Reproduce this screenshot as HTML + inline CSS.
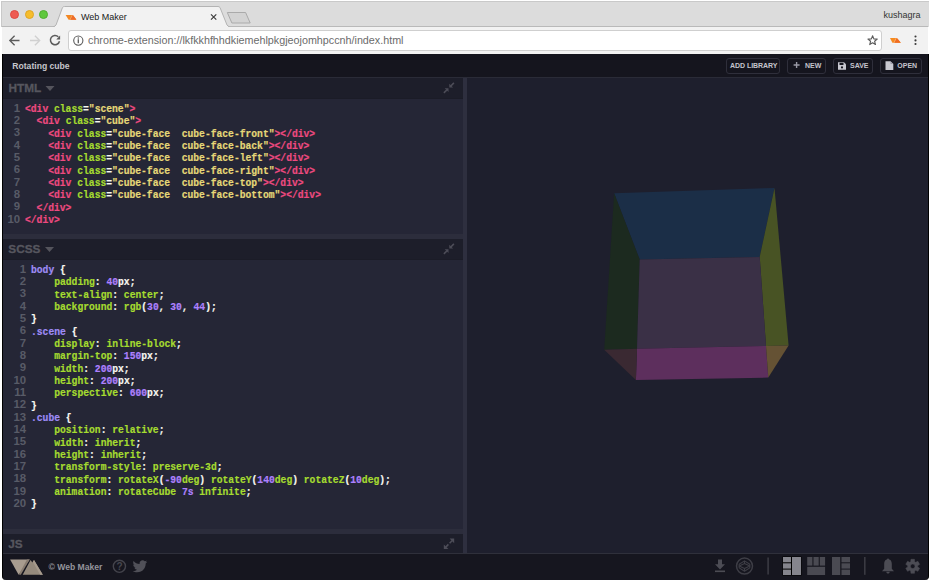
<!DOCTYPE html>
<html><head><meta charset="utf-8">
<style>
*{box-sizing:border-box;margin:0;padding:0}
html,body{width:930px;height:580px;overflow:hidden;background:#fff;font-family:"Liberation Sans",sans-serif}
.a{position:absolute}
#tabbar{left:1px;top:1px;width:928px;height:26px;background:#dcdcdc;border-top:1px solid #c9c9c9;border-left:1px solid #c9c9c9}
#toolbar{left:2px;top:26px;width:926px;height:28px;background:#f2f2f2;border-top:1px solid #b9b9b9}
.dot{width:9px;height:9px;border-radius:50%}
#url{left:68px;top:30px;width:814px;height:21px;background:#fff;border:1px solid #cfcfcf;border-radius:3px}
.urltext{left:88px;top:34px;font-size:10.76px;color:#6b6b6b;white-space:nowrap;letter-spacing:0}
#app{left:1.5px;top:54px;width:927px;height:526px;background:#16161f;border:1px solid #000;border-top:0;border-bottom:0;border-bottom-left-radius:4px;border-bottom-right-radius:4px}
#hdr{left:2.5px;top:54px;width:925px;height:23px;background:#15151e}
.ttl{left:12.3px;top:61px;font-size:8.6px;font-weight:bold;color:#c6c6cc}
.btn{top:58px;height:16px;border:1px solid #2f2f3b;border-radius:3px;color:#c4c4cc;font-size:7px;font-weight:bold;line-height:14.5px;white-space:nowrap}
.phdr{left:2.5px;width:460.5px;background:#1d1e2a}
.code{left:2.5px;width:460.5px;background:#252636}
.band{left:2.5px;width:460.5px;background:#2c2d3c}
.ptitle{font-size:11.8px;font-weight:bold;color:#56565e;-webkit-text-stroke:0.3px #56565e}
pre{font-family:"Liberation Mono",monospace;font-size:10.8px;line-height:12.33px;font-weight:bold;color:#f8f8f2;white-space:pre;transform:scaleX(0.8955);transform-origin:0 0;-webkit-text-stroke:0.2px currentColor}
.ln{transform:none;font-family:"Liberation Sans",sans-serif;font-size:11.4px;font-weight:bold;-webkit-text-stroke:0;color:#585b67;text-align:right}
.t{color:#ee4a80}.at{color:#a6dc30}.s{color:#e6d878}.n{color:#ae81ff}.sel{color:#9f8cf5}.w{color:#f8f8f2}
</style></head><body>
<!-- tab bar -->
<div id="tabbar" class="a"></div>
<div id="toolbar" class="a"></div>
<div class="a dot" style="left:10px;top:10px;background:#ee5b52;border:0.5px solid #de4a42"></div>
<div class="a dot" style="left:24.5px;top:10px;background:#f6bd2c;border:0.5px solid #dfa625"></div>
<div class="a dot" style="left:39px;top:10px;background:#5fc83d;border:0.5px solid #4fae2f"></div>
<svg class="a" style="left:0;top:0" width="930" height="30">
  <path d="M53.5 26.5 Q55 26.5 56 25 L62.5 7.5 Q63.2 6.5 64.5 6.5 L218 6.5 Q219.3 6.5 220 7.5 L227 25 Q228 26.5 229.5 26.5" fill="#f2f2f2" stroke="#b4b4b4" stroke-width="1"/>
  <rect x="55" y="26" width="173" height="2" fill="#f2f2f2"/>
  <path d="M227.3 12.5 L245.6 12.5 L250.2 23 L231.9 23 Z" fill="#d3d3d3" stroke="#aaaaaa" stroke-width="1" stroke-linejoin="round"/>
  <path d="M65.6 14.9 L72.9 14.9 L76.4 19.7 L68.6 19.7 Z" fill="#f38823"/>
  <path d="M72.4 14.9 L72.9 14.9 L76.4 19.7 L70.3 19.7 Z" fill="#ee6c2c"/>
  <path d="M71.9 14.9 L72.7 14.9 L70.3 19.7 L69.5 19.7 Z" fill="#f5a86c"/>
  <path d="M211 14.3 L216.3 19.6 M216.3 14.3 L211 19.6" stroke="#3c3c3c" stroke-width="1.15"/>
</svg>
<div class="a" style="left:81px;top:12px;font-size:9px;color:#1a1a1a;white-space:nowrap">Web Maker</div>
<div class="a" style="left:883.5px;top:10px;font-size:9px;color:#333;white-space:nowrap">kushagra</div>
<!-- toolbar -->
<div id="url" class="a"></div>
<svg class="a" style="left:0;top:27px" width="930" height="27">
  <path d="M9.8 13.5 H19.5 M14.6 8.7 L9.8 13.5 L14.6 18.3" fill="none" stroke="#5b5b5b" stroke-width="1.3"/>
  <path d="M30 13.5 H39.7 M34.9 8.7 L39.7 13.5 L34.9 18.3" fill="none" stroke="#d0d0d0" stroke-width="1.3"/>
  <path d="M58.3 9.8 A4.6 4.6 0 1 0 59.5 14.2" fill="none" stroke="#5b5b5b" stroke-width="1.5"/>
  <path d="M60.1 8.6 L60.1 12.4 L56.3 12.4 Z" fill="#5b5b5b"/>
  <circle cx="78.3" cy="13.6" r="4.6" fill="none" stroke="#5b5b5b" stroke-width="1.1"/>
  <path d="M78.3 12.3 V16.3" stroke="#5b5b5b" stroke-width="1.3"/>
  <circle cx="78.3" cy="10.9" r="0.75" fill="#5b5b5b"/>
  <path d="M872.60 8.70 L873.83 11.90 L877.26 12.09 L874.60 14.25 L875.48 17.56 L872.60 15.70 L869.72 17.56 L870.60 14.25 L867.94 12.09 L871.37 11.90 Z" fill="none" stroke="#5b5b5b" stroke-width="1.1" stroke-linejoin="round"/>
  <path d="M890 11 L896.9 11 L900.8 15.8 L892.4 15.8 Z" fill="#f68b1f"/>
  <path d="M896.3 11 L896.9 11 L900.8 15.8 L894.3 15.8 Z" fill="#f06c22"/>
  <path d="M895.8 11 L896.7 11 L894.3 15.8 L893.5 15.8 Z" fill="#f6b078"/>
  <circle cx="915.5" cy="9.5" r="1.05" fill="#3a3a3a"/><circle cx="915.5" cy="13.4" r="1.05" fill="#3a3a3a"/><circle cx="915.5" cy="17" r="1.05" fill="#3a3a3a"/>
</svg>
<div class="a urltext">chrome-extension://lkfkkhfhhdkiemehlpkgjeojomhpccnh/index.html</div>

<!-- app -->
<div id="app" class="a"></div>
<div id="hdr" class="a"></div>
<div class="a" style="left:2.5px;top:77px;width:925px;height:1px;background:#2a2b37"></div>
<div class="a ttl">Rotating cube</div>

<div class="a btn" style="left:725.5px;width:54.5px;padding-left:3.5px;letter-spacing:-0.05px">ADD LIBRARY</div>
<div class="a btn" style="left:787px;width:38.5px;padding-left:17px">NEW</div>
<div class="a btn" style="left:833px;width:39.5px;padding-left:16px">SAVE</div>
<div class="a btn" style="left:880px;width:41.5px;padding-left:16.3px">OPEN</div>
<svg class="a" style="left:0;top:54px" width="930" height="23">
  <path d="M796.6 8 V14 M793.6 11 H799.6" stroke="#9a9aa6" stroke-width="1.4"/>
  <path d="M838 8.2 H844 L846 10.2 V15.8 H838 Z" fill="#c8c8d0"/>
  <rect x="839.5" y="8.8" width="4" height="2.2" fill="#15151e"/>
  <circle cx="842" cy="13.4" r="1.1" fill="#15151e"/>
  <path d="M885.5 7.3 H890.5 L893.3 10.1 V16 H885.5 Z" fill="#c8c8d0"/>
  <path d="M890.5 7.3 V10.1 H893.3" fill="#9a9aa6"/>
</svg>

<!-- left panels -->
<div class="a phdr" style="top:78px;height:20px"></div>
<div class="a" style="left:2.5px;top:98px;width:460.5px;height:1px;background:#1b1c27"></div>
<div class="a code" style="top:99px;height:135px"></div>
<div class="a band" style="top:234px;height:5px"></div>
<div class="a phdr" style="top:239px;height:20px"></div>
<div class="a" style="left:2.5px;top:259px;width:460.5px;height:1px;background:#1b1c27"></div>
<div class="a code" style="top:260px;height:269px"></div>
<div class="a band" style="top:529px;height:5px"></div>
<div class="a phdr" style="top:534px;height:19px"></div>
<div class="a" style="left:463px;top:78px;width:4px;height:475px;background:#2e2f3f"></div>
<div class="a" style="left:467px;top:78px;width:460.5px;height:475px;background:#1e1f2d"></div>
<div class="a" style="left:2.5px;top:553px;width:925px;height:1px;background:#2f303b"></div>

<div class="a ptitle" style="left:8.5px;top:81px">HTML</div>
<div class="a ptitle" style="left:8.3px;top:242px">SCSS</div>
<div class="a ptitle" style="left:8.3px;top:536.7px">JS</div>
<svg class="a" style="left:0;top:0" width="930" height="580">
  <path d="M45.5 86 H54.5 L50 91 Z" fill="#54545c"/>
  <path d="M45 247 H54 L49.5 252 Z" fill="#54545c"/>

</svg>

<pre class="a ln" style="left:-10px;top:101.6px;width:30.2px">1
2
3
4
5
6
7
8
9
10</pre>
<pre class="a" style="left:24.7px;top:103px"><span class="t">&lt;div</span> <span class="at">class</span>=<span class="s">"scene"</span><span class="t">&gt;</span>
  <span class="t">&lt;div</span> <span class="at">class</span>=<span class="s">"cube"</span><span class="t">&gt;</span>
    <span class="t">&lt;div</span> <span class="at">class</span>=<span class="s">"cube-face  cube-face-front"</span><span class="t">&gt;&lt;/div&gt;</span>
    <span class="t">&lt;div</span> <span class="at">class</span>=<span class="s">"cube-face  cube-face-back"</span><span class="t">&gt;&lt;/div&gt;</span>
    <span class="t">&lt;div</span> <span class="at">class</span>=<span class="s">"cube-face  cube-face-left"</span><span class="t">&gt;&lt;/div&gt;</span>
    <span class="t">&lt;div</span> <span class="at">class</span>=<span class="s">"cube-face  cube-face-right"</span><span class="t">&gt;&lt;/div&gt;</span>
    <span class="t">&lt;div</span> <span class="at">class</span>=<span class="s">"cube-face  cube-face-top"</span><span class="t">&gt;&lt;/div&gt;</span>
    <span class="t">&lt;div</span> <span class="at">class</span>=<span class="s">"cube-face  cube-face-bottom"</span><span class="t">&gt;&lt;/div&gt;</span>
  <span class="t">&lt;/div&gt;</span>
<span class="t">&lt;/div&gt;</span></pre>
<pre class="a ln" style="left:-4px;top:262.6px;width:30.2px">1
2
3
4
5
6
7
8
9
10
11
12
13
14
15
16
17
18
19
20</pre>
<pre class="a" style="left:31.3px;top:264px"><span class="sel">body</span> {
    <span class="at">padding</span>: <span class="n">40</span>px;
    <span class="at">text-align</span>: <span class="at">center</span>;
    <span class="at">background</span>: <span class="at">rgb</span>(<span class="n">30</span>, <span class="n">30</span>, <span class="n">44</span>);
}
<span class="sel">.scene</span> {
    <span class="at">display</span>: <span class="at">inline-block</span>;
    <span class="at">margin-top</span>: <span class="n">150</span>px;
    <span class="at">width</span>: <span class="n">200</span>px;
    <span class="at">height</span>: <span class="n">200</span>px;
    <span class="at">perspective</span>: <span class="n">600</span>px;
}
<span class="sel">.cube</span> {
    <span class="at">position</span>: <span class="at">relative</span>;
    <span class="at">width</span>: <span class="at">inherit</span>;
    <span class="at">height</span>: <span class="at">inherit</span>;
    <span class="at">transform-style</span>: <span class="at">preserve-3d</span>;
    <span class="at">transform</span>: <span class="at">rotateX</span>(<span class="n">-90</span><span class="at">deg</span>) <span class="at">rotateY</span>(<span class="n">140</span><span class="at">deg</span>) <span class="at">rotateZ</span>(<span class="n">10</span><span class="at">deg</span>);
    <span class="at">animation</span>: <span class="at">rotateCube</span> <span class="n">7s</span> <span class="at">infinite</span>;
}</pre>

<svg class="a" style="left:0;top:0" width="930" height="580">
  <polygon points="614.1,193.3 774.5,187.9 759.7,256.9 639.7,259.6" fill="#1b2e47"/>
  <polygon points="614.1,193.3 639.7,259.6 637,348.8 604.2,349.7" fill="#1c2a1f"/>
  <polygon points="774.5,187.9 788.6,345.6 766,346 759.7,256.9" fill="#485324"/>
  <polygon points="639.7,259.6 759.7,256.9 766,346 637,348.8" fill="#3a3046"/>
  <polygon points="637,348.8 766,346 768.3,377.6 635.9,380.1" fill="#5d2f5d"/>
  <polygon points="604.2,349.7 637,348.8 635.9,380.1" fill="#3a2932"/>
  <polygon points="766,346 788.6,345.6 768.3,377.6" fill="#655234"/>
</svg>
<!-- footer -->
<svg class="a" style="left:0;top:553px" width="930" height="27">
  <path d="M10.1 6.6 L29.7 6.6 L18.6 21.8 Z" fill="#a89c8f"/>
  <path d="M27 6.6 L29.7 6.6 L20.8 21.8 L18.8 21.5 Z" fill="#877b70"/>
  <path d="M30.6 7 L32.3 9.4 L34 6.9 L42.8 21.8 L22.7 21.8 Z" fill="#958a7d"/>
  <path d="M34 6.9 L42.8 21.8 L40.2 21.8 L32.8 9 Z" fill="#a69a8d"/>
  <circle cx="119.4" cy="13.3" r="6.1" fill="none" stroke="#44444c" stroke-width="1.4"/>
  <text x="119.5" y="17.3" font-family="Liberation Sans" font-weight="bold" font-size="10" fill="#46464e" text-anchor="middle">?</text>
  <path transform="translate(132.6 7.3) scale(0.97) translate(-131.6 -6.7)" d="M146.5 8.2 C146 8.5 145.4 8.6 144.8 8.7 C145.5 8.3 146 7.6 146.2 6.9 C145.6 7.3 144.9 7.5 144.2 7.7 C143.6 7.1 142.8 6.7 141.9 6.7 C140.2 6.7 138.8 8.1 138.8 9.8 C138.8 10 138.8 10.3 138.9 10.5 C136.3 10.4 134.1 9.1 132.6 7.3 C132.3 7.8 132.2 8.3 132.2 8.9 C132.2 10 132.7 10.9 133.6 11.5 C133.1 11.5 132.6 11.3 132.2 11.1 C132.2 12.6 133.3 13.9 134.7 14.2 C134.4 14.3 134.2 14.3 133.9 14.3 C133.7 14.3 133.5 14.3 133.3 14.2 C133.7 15.4 134.8 16.3 136.2 16.4 C135.1 17.2 133.8 17.7 132.3 17.7 C132.1 17.7 131.8 17.7 131.6 17.7 C133 18.6 134.6 19.1 136.3 19.1 C142 19.1 145.1 14.4 145.1 10.3 L145.1 9.9 C145.7 9.4 146.2 8.9 146.5 8.2 Z" fill="#505058"/>
  <g fill="#4c4c54">
    <path d="M718 6.6 H722 V11.3 H725 L720 16.4 L715 11.3 H718 Z"/>
    <rect x="715" y="17.5" width="10" height="1.6"/>
  </g>
  <circle cx="744.5" cy="13.1" r="8" fill="none" stroke="#3e3e46" stroke-width="1.5"/>
  <g fill="none" stroke="#3e3e46" stroke-width="1.1" stroke-linejoin="round">
    <path d="M744.5 7.9 L749.8 11.3 V14.9 L744.5 18.3 L739.2 14.9 V11.3 Z"/>
    <path d="M744.5 10.6 L749.8 13.1 L744.5 15.6 L739.2 13.1 Z M744.5 7.9 V10.6 M744.5 15.6 V18.3"/>
  </g>
  <rect x="767.3" y="4.5" width="1.6" height="17" fill="#3a3a42"/>
  <rect x="864" y="4" width="1.6" height="17.8" fill="#3a3a42"/>
  <rect x="782.5" y="3.5" width="19" height="19" fill="#000"/>
  <g fill="#85858d">
    <rect x="783" y="4" width="8" height="5.3"/><rect x="783" y="10.3" width="8" height="5.3"/><rect x="783" y="16.6" width="8" height="5.4"/>
    <rect x="792" y="4" width="9" height="18"/>
  </g>
  <g fill="#4a4a52">
    <rect x="807.2" y="4" width="5.2" height="8.6"/><rect x="813.5" y="4" width="5.2" height="8.6"/><rect x="819.8" y="4" width="5.3" height="8.6"/>
    <rect x="807.2" y="13.8" width="17.9" height="8.2"/>
    <rect x="832" y="4" width="8.2" height="18"/>
    <rect x="841.5" y="4" width="8.5" height="5.3"/><rect x="841.5" y="10.3" width="8.5" height="5.3"/><rect x="841.5" y="16.6" width="8.5" height="5.4"/>
  </g>
  <path d="M888 6.2 C885.2 6.2 884.2 8.5 884.2 11 V15.8 L882 18.3 H894 L891.8 15.8 V11 C891.8 8.5 890.8 6.2 888 6.2 Z" fill="#4c4c54"/>
  <path d="M910.75 8.69 L910.92 6.32 L914.48 6.32 L914.65 8.69 L915.71 9.31 L917.85 8.27 L919.63 11.35 L917.66 12.68 L917.66 13.92 L919.63 15.25 L917.85 18.33 L915.71 17.29 L914.65 17.91 L914.48 20.28 L910.92 20.28 L910.75 17.91 L909.69 17.29 L907.55 18.33 L905.77 15.25 L907.74 13.92 L907.74 12.68 L905.77 11.35 L907.55 8.27 L909.69 9.31 Z M915.00 13.30 A2.3 2.3 0 1 0 910.40 13.30 A2.3 2.3 0 1 0 915.00 13.30 Z" fill="#4c4c54" fill-rule="evenodd" stroke="#4c4c54" stroke-width="0.5" stroke-linejoin="round"/>
  <circle cx="888" cy="6.4" r="1" fill="#4c4c54"/>
  <path d="M886.3 18.8 H889.7 C889.7 20 889 20.6 888 20.6 C887 20.6 886.3 20 886.3 18.8 Z" fill="#4c4c54"/>
</svg>
<div class="a" style="left:48.5px;top:561.5px;font-size:8.6px;font-weight:bold;color:#94949c;white-space:nowrap">© Web Maker</div>

<svg class="a" style="left:0;top:0" width="930" height="580">
  <path d="M449.3 83.7 V87.5 H453.1 Z" fill="#4d4d58"/>
  <path d="M450.8 86.0 L453.9 82.9" stroke="#4d4d58" stroke-width="1.6"/>
  <path d="M448.5 88.30000000000001 H444.7 L448.5 92.10000000000001 Z" fill="#4d4d58"/>
  <path d="M447 89.80000000000001 L443.9 92.9" stroke="#4d4d58" stroke-width="1.6"/>
  <path d="M449.3 244.70000000000002 V248.5 H453.1 Z" fill="#4d4d58"/>
  <path d="M450.8 247.0 L453.9 243.9" stroke="#4d4d58" stroke-width="1.6"/>
  <path d="M448.5 249.3 H444.7 L448.5 253.1 Z" fill="#4d4d58"/>
  <path d="M447 250.8 L443.9 253.9" stroke="#4d4d58" stroke-width="1.6"/>
  <path d="M454.2 538.6 V543.2 L449.6 538.6 Z" fill="#4d4d58"/>
  <path d="M452.3 540.5 L449.6 543.2" stroke="#4d4d58" stroke-width="1.6"/>
  <path d="M443.8 549.0 V544.4 L448.4 549.0 Z" fill="#4d4d58"/>
  <path d="M445.7 547.1 L448.4 544.4" stroke="#4d4d58" stroke-width="1.6"/>
</svg>
</body></html>
